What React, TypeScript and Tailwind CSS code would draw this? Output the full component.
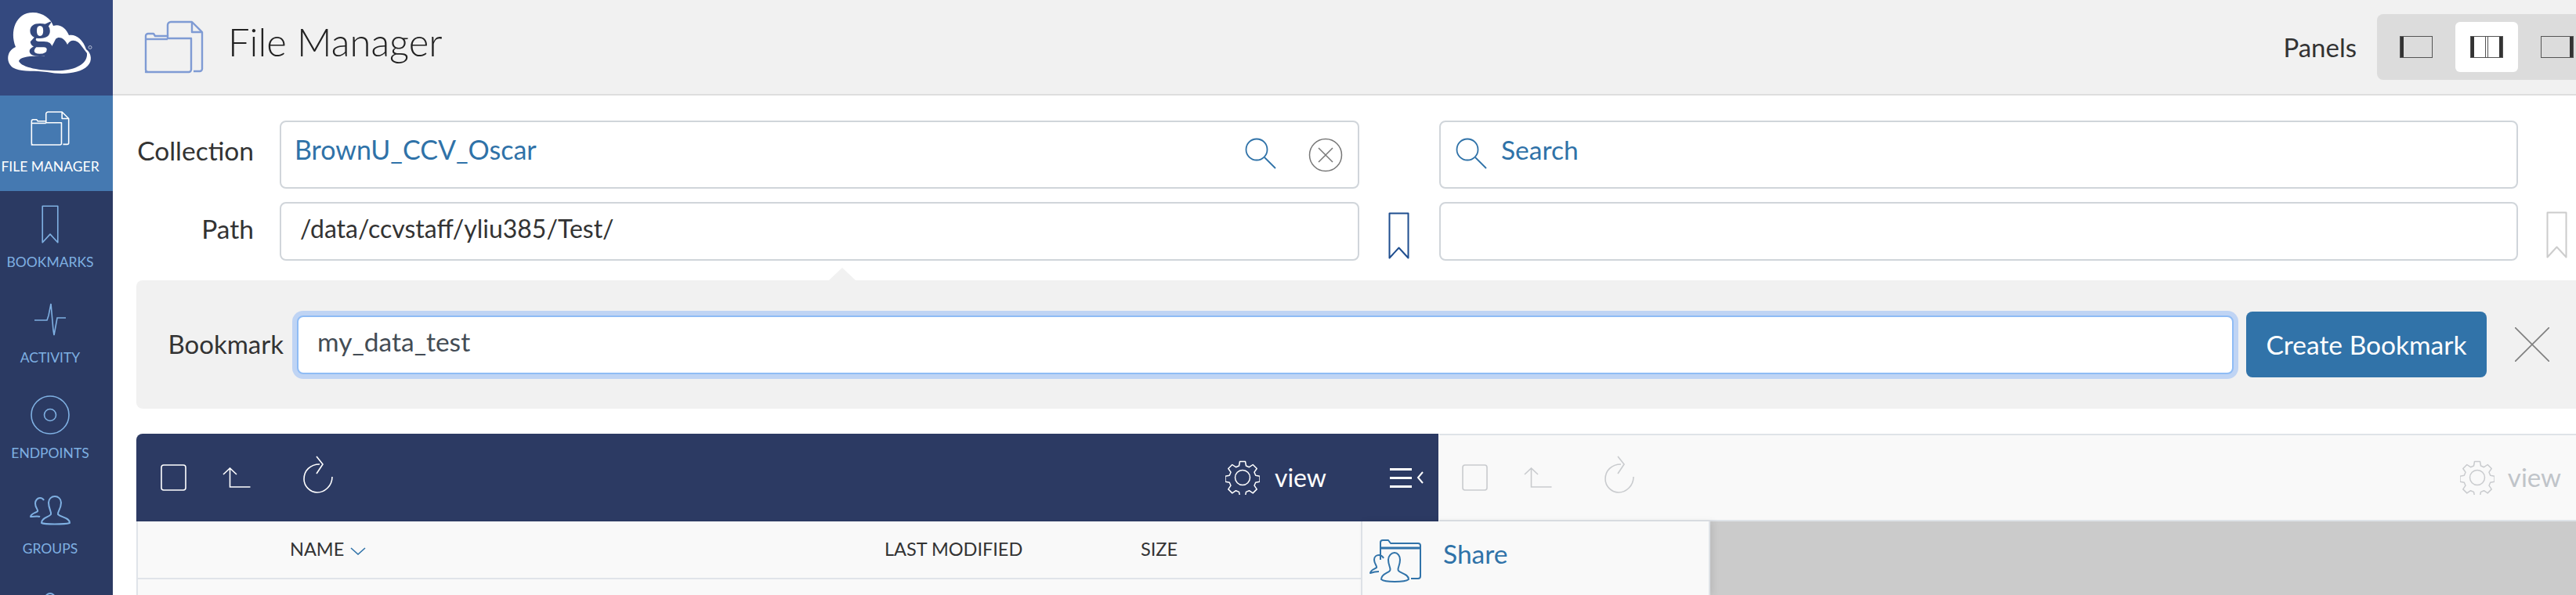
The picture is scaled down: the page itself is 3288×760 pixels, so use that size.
const navColor = '#7fb0e2'

function FolderDocIcon({ className, color }: { className: string; color: string }) {
  return (
    <svg viewBox="0 0 76 68" fill="none" stroke={color} strokeWidth="2.4" strokeLinejoin="round" className={className}>
      <path d="M30 20V6a4 4 0 0 1 4-4h27l13 13v47a3 3 0 0 1-3 3h-8" />
      <path d="M61 2v13h13" />
      <path d="M2 66h55a3 3 0 0 0 3-3V23H30v-3H14l-2-3H5a3 3 0 0 0-3 3v43a3 3 0 0 0 3 3z" />
      <path d="M2 24h28" />
    </svg>
  )
}

function BookmarkIcon({ className, color, width = 2 }: { className: string; color: string; width?: number }) {
  return (
    <svg viewBox="0 0 27 60" fill="none" stroke={color} strokeWidth={width} strokeLinejoin="round" className={className}>
      <path d="M1.5 1.5h24v57l-12-13-12 13z" />
    </svg>
  )
}

function SearchIcon() {
  return (
    <svg viewBox="0 0 40 40" fill="none" stroke="#2f72a8" strokeWidth="1.8" className="h-10 w-10 shrink-0">
      <circle cx="15" cy="15" r="13.5" />
      <path d="M25 25l14 14" />
    </svg>
  )
}

function CheckIcon({ color }: { color: string }) {
  return (
    <svg viewBox="0 0 33 34" fill="none" stroke={color} strokeWidth="1.6" className="h-[34px] w-[33px] shrink-0">
      <rect x="1" y="1" width="31" height="32" rx="3" />
    </svg>
  )
}

function UpIcon({ color }: { color: string }) {
  return (
    <svg viewBox="0 0 36 26" fill="none" stroke={color} strokeWidth="1.6" className="h-[26px] w-[36px] shrink-0">
      <path d="M1 9l8.5-8 8.5 8M9.5 1v24h26" />
    </svg>
  )
}

function RefreshIcon({ color }: { color: string }) {
  return (
    <svg viewBox="0 0 40 48" fill="none" stroke={color} strokeWidth="1.6" className="h-[48px] w-[40px] shrink-0">
      <path d="M22 11C10 11 2 19 2 30c0 9 8 17 17 17s19-8 19-20" />
      <path d="M18 1l8 10-8 12" />
    </svg>
  )
}

function GearIcon({ color }: { color: string }) {
  return (
    <svg viewBox="0 0 44 44" fill="none" stroke={color} strokeWidth="1.5" strokeLinejoin="round" className="h-11 w-11 shrink-0">
      <circle cx="22" cy="22" r="9.5" />
      <path d="M18.5 1.5h7l1 5.5 4 1.700 4.700-3.200 5 5-3.200 4.700 1.700 4 5.300 1v7l-5.300 1-1.700 4 3.200 4.700-5 5-4.700-3.200-4 1.700-1 5.300h-7l-1-5.300-4-1.700-4.700 3.200-5-5 3.200-4.700-1.700-4-5.300-1v-7l5.300-1 1.700-4-3.200-4.700 5-5 4.700 3.200 4-1.700z" />
    </svg>
  )
}

function PanelIcon({ left, right }: { left?: boolean; right?: boolean }) {
  return (
    <div className="flex h-7 w-[42px] border border-[#555]">
      <div className={`${left ? 'border-l-[4px] border-[#333]' : ''} flex-1`} />
      {left && right && <div className="w-1 border-x border-[#555]" />}
      {right && <div className="flex-1 border-r-[4px] border-[#333]" />}
    </div>
  )
}

function PeopleIcon({ className, color, width = 2 }: { className: string; color: string; width?: number }) {
  return (
    <svg viewBox="0 0 52 38" fill="none" stroke={color} strokeWidth={width} strokeLinejoin="round" className={className}>
      <path d="M13 27c-2-1-11 0-12 0 0-4 7-5 9-7 1-2-3-4-3-10 0-4 3-7 6-7 2 0 4 1 5 3" />
      <path d="M15 35c4 2 29 2 36 0 0-7-11-7-15-11-1-3 4-7 4-15 0-5-4-8-8-8s-8 3-8 8c0 8 4 12 3 15-3 4-12 4-12 11z" />
    </svg>
  )
}

function NavItem({ label, active, children }: { label: string; active?: boolean; children: React.ReactNode }) {
  return (
    <div className={`flex h-[122px] shrink-0 flex-col items-center justify-end pb-[20px] pr-4 ${active ? 'bg-[#4579b1] text-white' : 'text-[#7fb0e2]'}`}>
      <div className="flex h-[62px] items-center justify-center">{children}</div>
      <span className="mt-[7px] whitespace-nowrap text-[17.5px] leading-[22px]">{label}</span>
    </div>
  )
}

function Logo() {
  return (
    <div className="relative h-[122px] shrink-0 bg-[#34497f]">
      <svg viewBox="0 0 144 122" className="h-full w-full">
        <path
          fill="#fff"
          d="M20 60C12 40 20 16 42 16c13 0 23 8 26 17 8-3 16 2 20 12 8-2 18 5 22 18 7 5 8 15 2 21-10 10-32 12-52 8-15-2-30 0-40-4C8 84 6 66 20 60z"
        />
        <path
          fill="#34497f"
          d="M24 78c2-6 16-7 32-6 6-4 12-16 15-22 4-4 11-2 15 7 4-8 13-7 19 3l6 8c1 12-11 20-31 22-20 1-52-2-56-12z"
        />
        <circle cx="115" cy="60.5" r="2" fill="none" stroke="#cfd6e6" strokeWidth="0.8" />
      </svg>
      <span className="absolute left-[36px] top-[7px] font-['Liberation_Serif',serif] text-[62px] font-bold leading-[62px] text-[#34497f]">g</span>
    </div>
  )
}

function Sidebar() {
  return (
    <nav className="flex w-[144px] shrink-0 flex-col overflow-hidden bg-[#2b3a63]">
      <Logo />
      <NavItem label="FILE MANAGER" active>
        <FolderDocIcon className="h-[46px] w-[50px]" color="#fff" />
      </NavItem>
      <NavItem label="BOOKMARKS">
        <BookmarkIcon className="h-[49px] w-[22px]" color={navColor} />
      </NavItem>
      <NavItem label="ACTIVITY">
        <svg viewBox="0 0 40 42" fill="none" stroke={navColor} strokeWidth="1.6" className="h-[42px] w-10">
          <path d="M0 22h16l2-6 3-15 3 34 1 6 4-22h11" />
        </svg>
      </NavItem>
      <NavItem label="ENDPOINTS">
        <svg viewBox="0 0 50 50" fill="none" stroke={navColor} strokeWidth="1.6" className="h-[50px] w-[50px]">
          <circle cx="25" cy="25" r="24" />
          <circle cx="25" cy="25" r="7.5" />
        </svg>
      </NavItem>
      <NavItem label="GROUPS">
        <PeopleIcon className="h-[38px] w-[52px]" color={navColor} />
      </NavItem>
      <div className="flex shrink-0 justify-center pr-4 pt-[25px]">
        <div className="h-[14px] w-[14px] shrink-0 rounded-full border-2 border-[#7fb0e2]" />
      </div>
    </nav>
  )
}

function PanelSwitch() {
  return (
    <div className="flex items-center">
      <span className="mt-[2px] text-[33px] text-[#333]">Panels</span>
      <div className="ml-[26px] flex h-[84px] w-[254px] shrink-0 items-center rounded-l-[8px] bg-[#dcdcdc] pl-[29px]">
        <PanelIcon left />
        <div className="ml-[29px] flex h-16 w-20 shrink-0 items-center justify-center rounded-[6px] bg-white">
          <PanelIcon left right />
        </div>
        <div className="ml-[29px] shrink-0">
          <PanelIcon right />
        </div>
      </div>
    </div>
  )
}

function Toolbar({ dim }: { dim?: boolean }) {
  const color = dim ? '#c9cbce' : '#fff'
  return (
    <div className="flex h-full items-center">
      <CheckIcon color={color} />
      <div className="ml-[46px]"><UpIcon color={color} /></div>
      <div className="ml-[66px] -mt-2"><RefreshIcon color={color} /></div>
    </div>
  )
}

export default function App() {
  return (
    <div className="flex h-[760px] w-[3288px] overflow-hidden bg-white font-['Lato',sans-serif] text-[#333]">
      <Sidebar />
      <main className="flex min-w-0 flex-1 flex-col">
        <header className="flex h-[122px] shrink-0 items-center justify-between border-b-2 border-[#dedede] bg-[#f1f1f1] pl-[40px]">
          <div className="flex items-center">
            <FolderDocIcon className="h-[68px] w-[76px]" color="#7f9bd4" />
            <h1 className="ml-[31px] -mt-[14px] text-[49px] font-light leading-none text-[#222]">File Manager</h1>
          </div>
          <PanelSwitch />
        </header>

        <div className="flex flex-col pl-[30px] pt-[32px]">
          <div className="flex h-[87px]">
            <label className="w-[150px] shrink-0 whitespace-nowrap pt-[16px] text-right text-[33.5px] leading-[44px]">Collection</label>
            <div className="ml-[33px] flex w-[1378px] shrink-0 items-start rounded-[8px] border-2 border-[#d0d5da] pl-[17px] pr-[19px] pt-[20px]">
              <span className="-mt-[7px] flex-1 text-[34px] leading-[44px] text-[#2f72a8]">BrownU_CCV_Oscar</span>
              <SearchIcon />
              <svg viewBox="0 0 44 44" fill="none" stroke="#777" strokeWidth="1.5" className="ml-[41px] h-11 w-11">
                <circle cx="22" cy="22" r="20.5" />
                <path d="M13 13l18 18M31 13L13 31" />
              </svg>
            </div>
            <div className="ml-[102px] flex w-[1377px] shrink-0 items-start rounded-[8px] border-2 border-[#d0d5da] pl-[19px] pt-[20px]">
              <SearchIcon />
              <span className="-mt-[7px] ml-[18px] text-[33.5px] leading-[44px] text-[#2f72a8]">Search</span>
            </div>
          </div>

          <div className="mt-[17px] flex h-[75px]">
            <label className="w-[150px] shrink-0 pt-[12px] text-right text-[33.5px] leading-[44px]">Path</label>
            <div className="ml-[33px] w-[1378px] shrink-0 rounded-[8px] border-2 border-[#d0d5da] pl-[24px] pt-[10px] text-[32px] leading-[44px]">/data/ccvstaff/yliu385/Test/</div>
            <div className="ml-[37px] mt-[13px] shrink-0">
              <BookmarkIcon className="h-[60px] w-[27px]" color="#1f4e8f" />
            </div>
            <div className="ml-[38px] w-[1377px] shrink-0 rounded-[8px] border-2 border-[#d0d5da]" />
            <div className="ml-[36px] mt-[12px] shrink-0">
              <BookmarkIcon className="h-[60px] w-[27px]" color="#ccc" />
            </div>
          </div>

          <div className="relative mt-[25px] flex h-[164px] items-center rounded-l-[8px] bg-[#f1f1f1]">
            <div className="absolute left-[884px] top-[-16px] h-0 w-0 border-x-[17px] border-b-[16px] border-x-transparent border-b-[#f1f1f1]" />
            <label className="w-[188px] shrink-0 text-right text-[33px]">Bookmark</label>
            <div className="ml-[17px] h-[75px] w-[2472px] shrink-0 rounded-[8px] border-2 border-[#8fbcf5] bg-white pl-[24px] pt-[9px] text-[33.5px] leading-[44px] text-[#444c55] ring-[6px] ring-[#bfd4f4]">my_data_test</div>
            <button className="ml-[16px] h-[84px] w-[307px] shrink-0 rounded-[8px] bg-[#3173a9] text-[33.5px] text-white">Create Bookmark</button>
            <svg viewBox="0 0 44 44" fill="none" stroke="#7f7f7f" strokeWidth="1.6" className="ml-[36px] h-11 w-11 shrink-0">
              <path d="M0 0l44 44M44 0L0 44" />
            </svg>
          </div>

          <div className="mt-[32px] flex h-[112px]">
            <div className="flex w-[1662px] shrink-0 items-center justify-between rounded-tl-[8px] bg-[#2c3a63] pl-[31px] text-white">
              <Toolbar />
              <div className="flex items-center">
                <GearIcon color="#fff" />
                <span className="ml-[19px] text-[32px]">view</span>
                <div className="ml-[81px] flex w-[28px] flex-col gap-[8px]">
                  <div className="h-[3px] bg-white" />
                  <div className="h-[3px] bg-white" />
                  <div className="h-[3px] bg-white" />
                </div>
                <svg viewBox="0 0 9 16" fill="none" stroke="#fff" strokeWidth="2" className="ml-[6px] mr-[19px] h-4 w-[9px]">
                  <path d="M8 1L2 8l6 7" />
                </svg>
              </div>
            </div>
            <div className="ml-[1px] flex flex-1 items-center justify-between border-y-2 border-[#dfe3e8] bg-[#f9f9f9] pl-[29px] pr-[19px] text-[#c0c4c9]">
              <Toolbar dim />
              <div className="flex items-center">
                <GearIcon color="#c9cbce" />
                <span className="ml-[17px] text-[33px]">view</span>
              </div>
            </div>
          </div>

          <div className="flex h-[94px]">
            <div className="w-[1563px] shrink-0 border-l-2 border-[#e0e4e9] bg-[#f9f9f9]">
              <div className="flex h-[74px] items-center border-b-2 border-[#e0e4e9] text-[23.5px]">
                <span className="ml-[194px] w-[67px]">NAME</span>
                <svg viewBox="0 0 20 10" fill="none" stroke="#3173a9" strokeWidth="1.6" className="ml-[10px] mt-1 h-[10px] w-5">
                  <path d="M1 1l9 8 9-8" />
                </svg>
                <span className="ml-[662px] w-[175px] whitespace-nowrap">LAST MODIFIED</span>
                <span className="ml-[152px]">SIZE</span>
              </div>
            </div>
            <div className="relative z-10 flex w-[446px] shrink-0 items-start border-x-2 border-[#dde1e6] bg-[#f9f9f9] pl-[9px] pt-[23px] shadow-[4px_0_8px_rgba(0,0,0,0.08)]">
              <svg viewBox="0 0 66 56" fill="none" stroke="#3173a9" strokeWidth="2" strokeLinejoin="round" className="h-14 w-[66px] shrink-0">
                <path d="M14 26V4a3 3 0 0 1 3-3h7l3 4h35a3 3 0 0 1 3 3v39a3 3 0 0 1-3 3h-9" />
                <path d="M14 11h51" strokeWidth="3" />
                <path d="M12 41c-3 0-8 1-11 2 1-5 6-5 8-7 1-2-3-5-3-10 0-4 3-6 6-6s5 2 6 4" />
                <path d="M15 51c5 4 30 4 35 0 0-7-11-8-13-11-2-3 2-6 2-14 0-5-3-9-7-9s-8 4-8 9c0 8 4 11 2 14-2 3-11 4-11 11z" />
              </svg>
              <span className="ml-[28px] -mt-[2px] text-[33.5px] leading-[40px] text-[#2f72a8]">Share</span>
            </div>
            <div className="flex-1 bg-[#cbcbcb]" />
          </div>
        </div>
      </main>
    </div>
  )
}
